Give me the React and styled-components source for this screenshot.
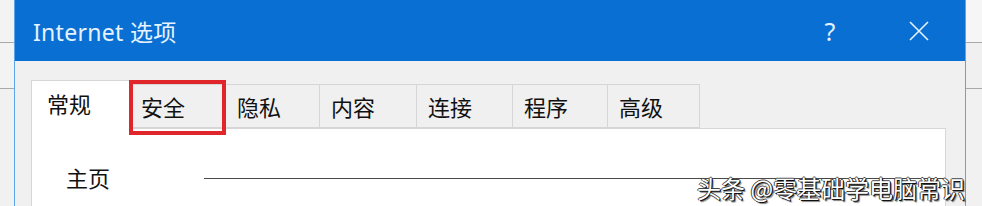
import React from 'react';
import styled, { createGlobalStyle } from 'styled-components';

const GlobalStyle = createGlobalStyle`
  html, body {
    margin: 0;
    padding: 0;
    background: #efefef;
    overflow: hidden;
  }
  body {
    font-family: "Noto Sans", "Noto Sans CJK SC", sans-serif;
  }
`;

const tabs = [
  { label: '常规', width: 99 },
  { label: '安全', width: 96 },
  { label: '隐私', width: 94 },
  { label: '内容', width: 97 },
  { label: '连接', width: 96 },
  { label: '程序', width: 95 },
  { label: '高级', width: 92 },
];

const Page = styled.div`
  position: relative;
  display: flex;
  width: 982px;
  height: 206px;
  overflow: hidden;
`;

const Strip = styled.div`
  width: ${(p) => p.$w}px;
  background: #f1f1f1;
  display: flex;
  flex-direction: column;
`;

const StripRow = styled.div`
  height: ${(p) => p.$h}px;
  border-bottom: 1px solid #a9a9a9;
  background: ${(p) => p.$bg || '#f3f3f3'};
`;

const Window = styled.div`
  width: 950px;
  display: flex;
  flex-direction: column;
  border-left: 1px solid #5aa6e8;
  border-right: 1px solid #5aa6e8;
  background: #f0f0f0;
`;

const TitleBar = styled.div`
  height: 61px;
  flex-shrink: 0;
  background: #0a6fd3;
  display: flex;
  align-items: center;
  padding-left: 18px;
  color: #e6f3ff;
`;

const Title = styled.div`
  font-family: "Noto Sans", "Noto Sans CJK SC", sans-serif;
  font-size: 23px;
  flex: 1;
  letter-spacing: 0.3px;
`;

const TitleButton = styled.div`
  width: ${(p) => p.$w}px;
  display: flex;
  justify-content: center;
  align-items: center;
  font-family: "Noto Sans", sans-serif;
  font-size: 25px;
  color: #e6f3ff;
`;

const Body = styled.div`
  flex: 1;
  padding: 19px 19px 0 16px;
  display: flex;
  flex-direction: column;
`;

const TabRow = styled.div`
  display: flex;
  align-items: flex-end;
  height: 48px;
  position: relative;
  z-index: 1;
`;

const Tab = styled.div`
  position: relative;
  box-sizing: border-box;
  width: ${(p) => p.$w}px;
  height: ${(p) => (p.$active ? 49 : 44)}px;
  margin-bottom: ${(p) => (p.$active ? -1 : 0)}px;
  padding-left: ${(p) => (p.$active ? 15 : 11)}px;
  display: flex;
  align-items: ${(p) => (p.$active ? 'flex-start' : 'center')};
  background: ${(p) => (p.$active ? '#ffffff' : '#f0f0f0')};
  border: 1px solid #d6d6d6;
  border-bottom: ${(p) => (p.$active ? 'none' : '1px solid #d6d6d6')};
  border-left: ${(p) => (p.$active ? '1px solid #d6d6d6' : 'none')};
  font-family: "Noto Sans CJK SC", sans-serif;
  font-size: 22px;
  color: #111;
  line-height: 44px;
`;

const Highlight = styled.div`
  position: absolute;
  top: -5px;
  left: -1px;
  right: -1px;
  bottom: -8px;
  border: 4px solid #e0262b;
  pointer-events: none;
`;

const Panel = styled.div`
  flex: 1;
  background: #ffffff;
  border: 1px solid #d6d6d6;
  border-bottom: none;
  padding: 32px 0 0 34px;
`;

const Field = styled.div`
  display: flex;
  align-items: center;
`;

const FieldLabel = styled.div`
  width: 138px;
  font-family: "Noto Sans CJK SC", sans-serif;
  font-size: 22px;
  color: #111;
`;

const FieldLine = styled.div`
  flex: 1;
  height: 1px;
  background: #4a4a4a;
  margin-top: 2px;
`;

const Watermark = styled.div`
  position: absolute;
  left: 697px;
  top: 170px;
  font-family: "Noto Sans CJK SC", sans-serif;
  font-size: 24px;
  color: #ffffff;
  white-space: nowrap;
  text-shadow: 1px 1px 0 #111, -1px 0 0 #444, 0 -1px 0 #444, 1px 0 0 #333, 2px 2px 1px rgba(0, 0, 0, 0.5);
`;

const CloseIcon = () => (
  <svg width="22" height="20" viewBox="0 0 22 20">
    <path d="M2 1 L20 19 M20 1 L2 19" stroke="#e6f3ff" strokeWidth="1.6" fill="none" />
  </svg>
);

export default function App() {
  return (
    <>
      <GlobalStyle />
      <Page>
        <Strip $w={14}>
          <StripRow $h={42} />
          <StripRow $h={45} />
        </Strip>
        <Window>
          <TitleBar>
            <Title>Internet 选项</Title>
            <TitleButton $w={30}>?</TitleButton>
            <TitleButton $w={54} />
            <TitleButton $w={40}>
              <CloseIcon />
            </TitleButton>
            <TitleButton $w={26} />
          </TitleBar>
          <Body>
            <TabRow>
              {tabs.map((t, i) => (
                <Tab key={t.label} $w={t.width} $active={i === 0}>
                  {t.label}
                  {i === 1 && <Highlight />}
                </Tab>
              ))}
            </TabRow>
            <Panel>
              <Field>
                <FieldLabel>主页</FieldLabel>
                <FieldLine />
              </Field>
            </Panel>
          </Body>
        </Window>
        <Strip $w={16}>
          <StripRow $h={42} $bg="#f6f6f6" />
          <StripRow $h={45} $bg="#f0f0f0" />
        </Strip>
        <Watermark>头条 @零基础学电脑常识</Watermark>
      </Page>
    </>
  );
}
